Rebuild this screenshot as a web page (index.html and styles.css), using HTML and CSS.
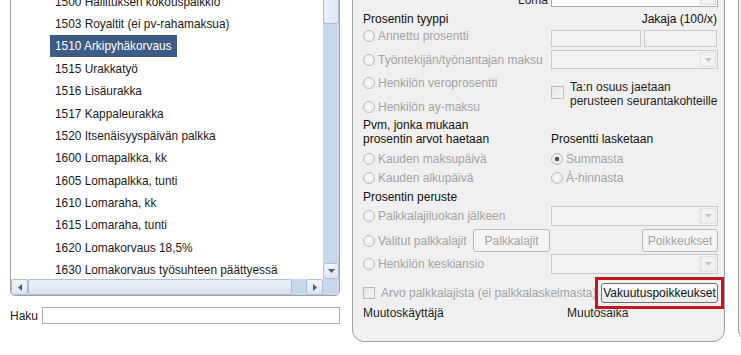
FILE: index.html
```html
<!DOCTYPE html>
<html lang="fi">
<head>
<meta charset="utf-8">
<title>Palkkalajit</title>
<link rel="stylesheet" href="styles.css">
</head>
<body>
<div class="app">
  <div class="left">
    <div class="list">
      <div class="items">
        <div class="item"><span>1500 Hallituksen kokouspalkkio</span></div>
        <div class="item"><span>1503 Royaltit (ei pv-rahamaksua)</span></div>
        <div class="item sel"><span>1510 Arkipyhäkorvaus</span></div>
        <div class="item"><span>1515 Urakkatyö</span></div>
        <div class="item"><span>1516 Lisäurakka</span></div>
        <div class="item"><span>1517 Kappaleurakka</span></div>
        <div class="item"><span>1520 Itsenäisyyspäivän palkka</span></div>
        <div class="item"><span>1600 Lomapalkka, kk</span></div>
        <div class="item"><span>1605 Lomapalkka, tunti</span></div>
        <div class="item"><span>1610 Lomaraha, kk</span></div>
        <div class="item"><span>1615 Lomaraha, tunti</span></div>
        <div class="item"><span>1620 Lomakorvaus 18,5%</span></div>
        <div class="item"><span>1630 Lomakorvaus työsuhteen päättyessä</span></div>
      </div>
      <div class="vscroll">
        <div class="vthumb"></div>
        <div class="sbtn vbtn"><svg width="7" height="4" viewBox="0 0 7 4"><path d="M0 0h7L3.5 4z" fill="#4f5d72"/></svg></div>
      </div>
      <div class="hscroll">
        <div class="sbtn hbtn"><svg width="4" height="7" viewBox="0 0 4 7"><path d="M4 0v7L0 3.5z" fill="#4f5d72"/></svg></div>
        <div class="hthumb"></div>
        <div class="htrack"></div>
        <div class="sbtn hbtn"><svg width="4" height="7" viewBox="0 0 4 7"><path d="M0 0v7l4-3.5z" fill="#4f5d72"/></svg></div>
      </div>
      <div class="corner"></div>
    </div>
    <div class="search">
      <label for="haku">Haku</label>
      <input id="haku" type="text">
    </div>
  </div>

  <div class="panel">
    <div class="g2 loma">
      <div class="lbl">Loma</div>
      <div class="combo on"><div class="dd"><svg width="7" height="4" viewBox="0 0 7 4"><path d="M0 0h7L3.5 4z" fill="#8a8a8a"/></svg></div></div>
    </div>

    <div class="g2 sec1">
      <div class="col">
        <div class="head">Prosentin tyyppi</div>
        <div class="radio"><span class="rb"></span>Annettu prosentti</div>
        <div class="radio"><span class="rb"></span>Työntekijän/työnantajan maksu</div>
        <div class="radio"><span class="rb"></span>Henkilön veroprosentti</div>
        <div class="radio"><span class="rb"></span>Henkilön ay-maksu</div>
      </div>
      <div class="col">
        <div class="jak">Jakaja (100/x)</div>
        <div class="boxes"><div class="box b1"></div><div class="box b2"></div></div>
        <div class="combo c19"><div class="dd"><svg width="7" height="4" viewBox="0 0 7 4"><path d="M0 0h7L3.5 4z" fill="#c4c4c4"/></svg></div></div>
        <div class="chkblock"><span class="cb"></span><span class="t">Ta:n osuus jaetaan<br>perusteen seurantakohteille</span></div>
      </div>
    </div>

    <div class="g2 pvm">
      <div>Pvm, jonka mukaan<br>prosentin arvot haetaan</div>
      <div class="pl">Prosentti lasketaan</div>
    </div>

    <div class="g2 r19 first">
      <div class="radio"><span class="rb"></span>Kauden maksupäivä</div>
      <div class="radio"><span class="rb on"></span>Summasta</div>
    </div>
    <div class="g2 r19">
      <div class="radio"><span class="rb"></span>Kauden alkupäivä</div>
      <div class="radio"><span class="rb"></span>À-hinnasta</div>
    </div>

    <div class="peruste">Prosentin peruste</div>

    <div class="g2 rowc">
      <div class="radio"><span class="rb"></span>Palkkalajiluokan jälkeen</div>
      <div class="combo"><div class="dd"><svg width="7" height="4" viewBox="0 0 7 4"><path d="M0 0h7L3.5 4z" fill="#c4c4c4"/></svg></div></div>
    </div>

    <div class="g2 rowb">
      <div class="radio"><span class="rb"></span>Valitut palkkalajit<button class="btn pk" type="button">Palkkalajit</button></div>
      <button class="btn po" type="button">Poikkeukset</button>
    </div>

    <div class="g2 rowc rowc2">
      <div class="radio"><span class="rb"></span>Henkilön keskiansio</div>
      <div class="combo"><div class="dd"><svg width="7" height="4" viewBox="0 0 7 4"><path d="M0 0h7L3.5 4z" fill="#c4c4c4"/></svg></div></div>
    </div>

    <div class="arvo">
      <div class="radio"><span class="cb cb2"></span>Arvo palkkalajista (ei palkkalaskelmasta)</div>
      <span class="hl"><button class="btn vak" type="button">Vakuutuspoikkeukset</button></span>
    </div>

    <div class="muutos">
      <div>Muutoskäyttäjä</div>
      <div>Muutosaika</div>
    </div>
  </div>

  <div class="panel2"></div>
</div>
</body>
</html>
```
FILE: styles.css
```css
* { box-sizing: border-box; }
html, body { margin: 0; padding: 0; overflow: hidden; background: #fff; }
body {
  width: 741px;
  height: 355px;
  font-family: "Liberation Sans", Arial, sans-serif;
  font-size: 12px;
  color: #1a1a1a;
}

.app {
  display: flex;
  align-items: flex-start;
  margin-top: -20px;
  padding-left: 10px;
}

/* ---------- left list ---------- */
.left { width: 330px; flex: none; display: flex; flex-direction: column; }

.list {
  height: 316px;
  border: 1px solid #a3a3a3;
  border-radius: 0 0 5px 5px;
  overflow: hidden;
  display: grid;
  grid-template-columns: 1fr 16px;
  grid-template-rows: 1fr 16px;
  background: #fff;
}
.items { padding: 9.4px 0 0 39px; overflow: hidden; min-height: 0; }
.item { height: 22.4px; display: flex; align-items: center; }
.item span { padding: 0 5px; line-height: 22px; white-space: nowrap; color: #1a1a1a; font-size: 11.85px; }
.item.sel span { background: #3d5b87; color: #fff; }

.vscroll {
  background: #c8d8ec;
  display: flex;
  flex-direction: column;
  justify-content: space-between;
  min-height: 0;
}
.vthumb {
  height: 43px;
  background: linear-gradient(to right, #eef2f8, #dfe7f2);
  border: 1px solid #a9bad3;
  border-radius: 3px;
}
.sbtn {
  background: linear-gradient(#f3f6fa, #dde5f0);
  border: 1px solid #aebed6;
  border-radius: 3px;
  display: flex;
  align-items: center;
  justify-content: center;
}
.vbtn { height: 16px; }
.hscroll { display: flex; background: #c8d8ec; }
.hbtn { width: 17px; flex: none; }
.hthumb {
  width: 264px;
  flex: none;
  background: linear-gradient(#eef2f8, #dae3ef);
  border: 1px solid #aebed6;
  border-radius: 3px;
}
.htrack { flex: 1; }
.corner { background: #c8d8ec; }

.search { display: flex; align-items: center; margin-top: 11px; height: 17px; }
.search label { width: 32px; flex: none; color: #1a1a1a; }
.search input {
  flex: 1;
  height: 17px;
  margin: 0;
  padding: 0 2px;
  border: 1px solid #abadb3;
  background: #fff;
  font: inherit;
}

/* ---------- right panel ---------- */
.panel {
  flex: none;
  width: 373px;
  height: 362px;
  margin-left: 12px;
  background: #f0f0f0;
  border: 1px solid #9f9f9f;
  border-radius: 12px;
  padding: 7px 6px 0 10px;
  color: #1e1e1e;
}
.panel2 {
  flex: none;
  width: 40px;
  height: 362px;
  margin-left: 13px;
  background: #f0f0f0;
  border: 1px solid #9f9f9f;
  border-radius: 12px;
}

.g2 { display: grid; grid-template-columns: 188px 167px; }

.loma { height: 19px; }
.loma .lbl { justify-self: end; align-self: end; padding-right: 3px; line-height: 14px; }

.combo {
  height: 20px;
  border: 1px solid #cbcbcb;
  background: #f2f2f2;
  display: flex;
  justify-content: flex-end;
  padding: 1px;
}
.combo.on { height: 19px; background: #fff; border-color: #acacac; }
.combo.c19 { height: 19px; margin-top: 3px; }
.dd {
  width: 16px;
  border: 1px solid #e2e2e2;
  display: flex;
  align-items: center;
  justify-content: center;
}
.combo.on .dd { border-color: #dadada; background: #f3f3f3; }

.sec1 { margin-top: 5px; align-items: start; }
.col { display: flex; flex-direction: column; }
.head { height: 14px; line-height: 14px; color: #111; }
.jak { height: 14px; line-height: 14px; text-align: right; padding-right: 1px; color: #111; }

.radio {
  height: 20px;
  display: flex;
  align-items: center;
  color: #a3a3a3;
  white-space: nowrap;
}
.col .radio + .radio { margin-top: 3.5px; }
.rb {
  flex: none;
  width: 12px;
  height: 12px;
  margin-right: 3px;
  border-radius: 50%;
  border: 1px solid #bbbbbb;
  background: radial-gradient(circle at 50% 45%, #fcfcfc, #e4e4e4);
}
.rb.on {
  background:
    radial-gradient(circle at 50% 50%, #555 0, #555 2px, transparent 2.6px),
    radial-gradient(circle at 50% 45%, #fcfcfc, #e4e4e4);
}

.boxes { display: flex; gap: 3px; margin-top: 4px; height: 17px; }
.box { border: 1px solid #cbcbcb; background: #f2f2f2; }
.b1 { width: 90px; }
.b2 { width: 73px; }

.chkblock { display: flex; align-items: flex-start; margin-top: 12px; }
.cb {
  flex: none;
  width: 13px;
  height: 13px;
  border: 1px solid #bbbbbb;
  background: linear-gradient(135deg, #e1e4ea, #f8f8f8);
}
.chkblock .cb { margin-top: 5px; }
.chkblock .t { margin-left: 6px; line-height: 13.5px; white-space: nowrap; color: #1e1e1e; }

.pvm { margin-top: 1.5px; line-height: 14px; color: #111; }
.pvm .pl { align-self: end; }

.r19 { height: 19px; }
.r19 .radio { height: 19px; }
.r19.first { margin-top: 3px; }

.peruste { height: 18px; line-height: 18px; margin-top: 1px; color: #111; }

.rowc { height: 20px; }
.rowc2 { margin-top: 2px; }

.btn {
  font: inherit;
  height: 23px;
  padding: 0;
  border: 1px solid #b9b9b9;
  border-radius: 3px;
  background: #f5f5f5;
  color: #a3a3a3;
}
.rowb { height: 23px; margin-top: 3px; }
.rowb .radio { height: 23px; }
.btn.pk { width: 77px; margin-left: auto; margin-right: 1px; }
.btn.po { width: 76px; justify-self: end; }

.arvo {
  display: flex;
  justify-content: space-between;
  align-items: center;
  height: 20px;
  margin-top: 9px;
}
.arvo .radio { flex: 1; min-width: 0; overflow: visible; }
.cb2 { width: 12px; height: 12px; margin-right: 6px; }

/* red highlight frame around the button (sharp corners) */
.hl {
  flex: none;
  display: block;
  margin: -6px -6px -6px 0;
  padding: 3px;
  border: 3px solid #c5161e;
}
.btn.vak {
  display: block;
  width: 117px;
  height: 20px;
  border-color: #707070;
  background: linear-gradient(#fefefe, #ececec);
  color: #111;
}

.muutos {
  display: grid;
  grid-template-columns: 204px 1fr;
  margin-top: 3px;
  line-height: 14px;
  color: #1e1e1e;
}
```
